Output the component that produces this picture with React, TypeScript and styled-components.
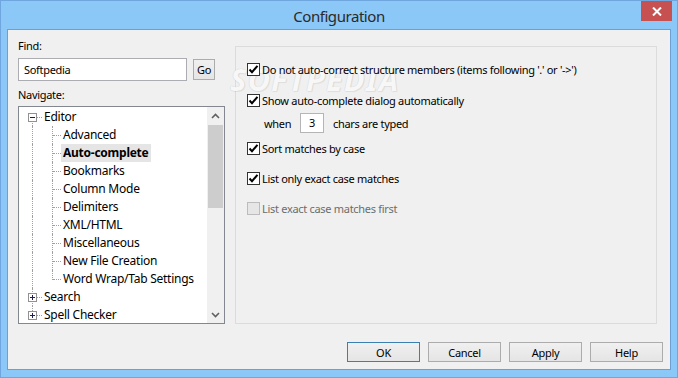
import React from 'react';
import styled, { createGlobalStyle } from 'styled-components';

const GlobalStyle = createGlobalStyle`
  html, body {
    margin: 0;
    padding: 0;
  }
  body {
    background: #8bc7f7;
    font-family: 'Noto Sans', 'Open Sans', sans-serif;
    font-size: 11px;
    letter-spacing: -0.3px;
    color: #000;
  }
  * {
    box-sizing: border-box;
  }
`;

const Window = styled.div`
  width: 678px;
  height: 378px;
  display: flex;
  flex-direction: column;
  background: #8bc7f7;
  border: 1px solid #6fa6dd;
`;

const TitleBar = styled.div`
  height: 28px;
  display: grid;
  grid-template-columns: 1fr auto 1fr;
  padding: 0 5px;
`;

const Title = styled.div`
  grid-column: 2;
  font-size: 15px;
  letter-spacing: -0.45px;
  line-height: 30px;
  color: #2a2a2a;
`;

const CloseButton = styled.div`
  grid-column: 3;
  justify-self: end;
  width: 31px;
  height: 20px;
  background: #c75050;
  display: flex;
  align-items: center;
  justify-content: center;
`;

const Client = styled.div`
  flex: 1;
  margin: 0 6px 7px;
  border: 1px solid #6d9fd4;
  background: #f0f0f0;
  padding: 8px 7px 0 10px;
  display: flex;
  flex-direction: column;
`;

const MainRow = styled.div`
  display: flex;
  gap: 10px;
  padding-right: 6px;
`;

const LeftColumn = styled.div`
  width: 207px;
  display: flex;
  flex-direction: column;
`;

const FieldLabel = styled.div<{ $gap?: number }>`
  line-height: 16px;
  margin-top: ${p => p.$gap ?? 0}px;
`;

const FindRow = styled.div`
  display: flex;
  align-items: flex-start;
  gap: 6px;
  margin-top: 4px;
`;

const TextBox = styled.div`
  width: 169px;
  height: 23px;
  border: 1px solid #abadb3;
  background: #fff;
  padding: 0 5px;
  line-height: 21px;
`;

const SmallButton = styled.div`
  margin-top: 1px;
  width: 22px;
  height: 21px;
  border: 1px solid #acacac;
  background: linear-gradient(#f0f0f0, #e5e5e5);
  display: flex;
  align-items: center;
  justify-content: center;
`;

const TreeBox = styled.div`
  margin-top: 3px;
  height: 218px;
  border: 1px solid #828790;
  background: #fff;
  display: flex;
`;

const TreeList = styled.div`
  flex: 1;
  padding-top: 1px;
  overflow: hidden;
  font-size: 12px;
  letter-spacing: -0.25px;
`;

const Row = styled.div<{ $level: number }>`
  position: relative;
  height: 18px;
  line-height: 18px;
  padding-left: ${p => (p.$level === 0 ? 25 : 44)}px;
  white-space: nowrap;
`;

const Guide = styled.span<{ $left: number; $top: number; $height: number }>`
  position: absolute;
  left: ${p => p.$left}px;
  top: ${p => p.$top}px;
  height: ${p => p.$height}px;
  border-left: 1px dotted #a0a0a0;
`;

const Elbow = styled.span<{ $left: number; $width: number }>`
  position: absolute;
  left: ${p => p.$left}px;
  top: 9px;
  width: ${p => p.$width}px;
  border-top: 1px dotted #a0a0a0;
`;

const Expander = styled.svg`
  position: absolute;
  left: 9px;
  top: 5px;
`;

const NodeText = styled.span<{ $selected?: boolean }>`
  display: inline-block;
  margin-left: -2px;
  padding: 0 2px;
  font-weight: ${p => (p.$selected ? 700 : 400)};
  background: ${p => (p.$selected ? '#e5e5e5' : 'transparent')};
`;

const ScrollBar = styled.div`
  width: 17px;
  background: #f0f0f0;
  display: flex;
  flex-direction: column;
`;

const ScrollArrow = styled.div`
  height: 17px;
  display: flex;
  align-items: center;
  justify-content: center;
`;

const Thumb = styled.div`
  margin: 1px 1px 0;
  height: 83px;
  background: #cdcdcd;
`;

const Spacer = styled.div`
  flex: 1;
`;

const GroupBox = styled.div`
  position: relative;
  flex: 1;
  margin-top: 8px;
  height: 278px;
  border: 1px solid #dcdcdc;
  padding: 14px 11px;
  display: flex;
  flex-direction: column;
`;

const Watermark = styled.div`
  position: absolute;
  left: -6px;
  top: 11px;
  font-size: 31px;
  font-weight: 700;
  font-style: italic;
  letter-spacing: 1px;
  color: #f7f7f7;
  text-shadow: 0 0 1px rgba(0, 0, 0, 0.18), 1px 1px 1px rgba(0, 0, 0, 0.06);
  pointer-events: none;
  z-index: 0;
`;

const Option = styled.div<{ $gap: number; $disabled?: boolean }>`
  position: relative;
  z-index: 1;
  display: flex;
  align-items: center;
  height: 16px;
  margin-top: ${p => p.$gap}px;
  color: ${p => (p.$disabled ? '#6d6d6d' : '#000')};
`;

const Box = styled.div<{ $disabled?: boolean }>`
  width: 13px;
  height: 13px;
  margin-right: 2px;
  border: 1px solid ${p => (p.$disabled ? '#bcbcbc' : '#333')};
  background: ${p => (p.$disabled ? '#e6e6e6' : '#fff')};
  display: flex;
  align-items: center;
  justify-content: center;
`;

const WhenRow = styled.div`
  display: flex;
  align-items: center;
  height: 20px;
  margin-top: 5px;
  padding-left: 17px;
`;

const WhenLabel = styled.span`
  width: 36px;
`;

const NumberBox = styled.div`
  width: 24px;
  height: 20px;
  border: 1px solid #b5b5b5;
  background: #fff;
  text-align: center;
  line-height: 18px;
  margin-right: 9px;
`;

const ButtonRow = styled.div`
  display: flex;
  justify-content: flex-end;
  gap: 8px;
  margin-top: 18px;
`;

const DialogButton = styled.div<{ $default?: boolean }>`
  width: 73px;
  height: 20px;
  border: 1px solid ${p => (p.$default ? '#3c7fb1' : '#acacac')};
  background: linear-gradient(#f0f0f0, #e5e5e5);
  display: flex;
  align-items: center;
  justify-content: center;
`;

type Node = { label: string; level: number; selected?: boolean; expander?: '+' | '-' };

const nodes: Node[] = [
  { label: 'Editor', level: 0, expander: '-' },
  { label: 'Advanced', level: 1 },
  { label: 'Auto-complete', level: 1, selected: true },
  { label: 'Bookmarks', level: 1 },
  { label: 'Column Mode', level: 1 },
  { label: 'Delimiters', level: 1 },
  { label: 'XML/HTML', level: 1 },
  { label: 'Miscellaneous', level: 1 },
  { label: 'New File Creation', level: 1 },
  { label: 'Word Wrap/Tab Settings', level: 1 },
  { label: 'Search', level: 0, expander: '+' },
  { label: 'Spell Checker', level: 0, expander: '+' },
];

function ExpanderIcon({ kind }: { kind: '+' | '-' }) {
  return (
    <Expander width="9" height="9" viewBox="0 0 9 9">
      <rect x="0.5" y="0.5" width="8" height="8" fill="#fff" stroke="#919191" />
      <path d="M2 4.5h5" stroke="#1e1e50" />
      {kind === '+' && <path d="M4.5 2v5" stroke="#1e1e50" />}
    </Expander>
  );
}

function Check() {
  return (
    <svg width="11" height="11" viewBox="0 0 11 11">
      <path d="M1.5 5.5 L4 8.2 L9.5 1.8" fill="none" stroke="#000" strokeWidth="2" />
    </svg>
  );
}

function Chevron({ up }: { up?: boolean }) {
  return (
    <svg width="9" height="6" viewBox="0 0 9 6">
      <path
        d={up ? 'M1 5 L4.5 1.5 L8 5' : 'M1 1 L4.5 4.5 L8 1'}
        fill="none"
        stroke="#606060"
        strokeWidth="1.6"
      />
    </svg>
  );
}

function TreeRow({ node, index }: { node: Node; index: number }) {
  const lastChild = index === 9;
  const lastNode = index === nodes.length - 1;
  return (
    <Row $level={node.level}>
      {index === 0 && <Guide $left={13} $top={13} $height={5} />}
      {index > 0 && !lastNode && <Guide $left={13} $top={0} $height={18} />}
      {lastNode && <Guide $left={13} $top={0} $height={5} />}
      {node.level === 1 && (
        <>
          <Guide $left={33} $top={0} $height={lastChild ? 10 : 18} />
          <Elbow $left={34} $width={8} />
        </>
      )}
      {node.expander && (
        <>
          <ExpanderIcon kind={node.expander} />
          <Elbow $left={18} $width={5} />
        </>
      )}
      <NodeText $selected={node.selected}>{node.label}</NodeText>
    </Row>
  );
}

const options = [
  { label: "Do not auto-correct structure members (items following '.' or '->')", gap: 0 },
  { label: 'Show auto-complete dialog automatically', gap: 15 },
];

export default function App() {
  return (
    <>
      <GlobalStyle />
      <Window>
        <TitleBar>
          <Title>Configuration</Title>
          <CloseButton>
            <svg width="10" height="9" viewBox="0 0 10 9">
              <path d="M1 0.5 L9 8.5 M9 0.5 L1 8.5" stroke="#fff" strokeWidth="2" />
            </svg>
          </CloseButton>
        </TitleBar>
        <Client>
          <MainRow>
            <LeftColumn>
              <FieldLabel>Find:</FieldLabel>
              <FindRow>
                <TextBox>Softpedia</TextBox>
                <SmallButton>Go</SmallButton>
              </FindRow>
              <FieldLabel $gap={6}>Navigate:</FieldLabel>
              <TreeBox>
                <TreeList>
                  {nodes.map((n, i) => (
                    <TreeRow key={n.label} node={n} index={i} />
                  ))}
                </TreeList>
                <ScrollBar>
                  <ScrollArrow>
                    <Chevron up />
                  </ScrollArrow>
                  <Thumb />
                  <Spacer />
                  <ScrollArrow>
                    <Chevron />
                  </ScrollArrow>
                </ScrollBar>
              </TreeBox>
            </LeftColumn>
            <GroupBox>
              <Watermark>SOFTPEDIA</Watermark>
              {options.map(o => (
                <Option key={o.label} $gap={o.gap}>
                  <Box>
                    <Check />
                  </Box>
                  {o.label}
                </Option>
              ))}
              <WhenRow>
                <WhenLabel>when</WhenLabel>
                <NumberBox>3</NumberBox>
                chars are typed
              </WhenRow>
              <Option $gap={7}>
                <Box>
                  <Check />
                </Box>
                Sort matches by case
              </Option>
              <Option $gap={14}>
                <Box>
                  <Check />
                </Box>
                List only exact case matches
              </Option>
              <Option $gap={14} $disabled>
                <Box $disabled />
                List exact case matches first
              </Option>
            </GroupBox>
          </MainRow>
          <ButtonRow>
            <DialogButton $default>OK</DialogButton>
            <DialogButton>Cancel</DialogButton>
            <DialogButton>Apply</DialogButton>
            <DialogButton>Help</DialogButton>
          </ButtonRow>
        </Client>
      </Window>
    </>
  );
}
